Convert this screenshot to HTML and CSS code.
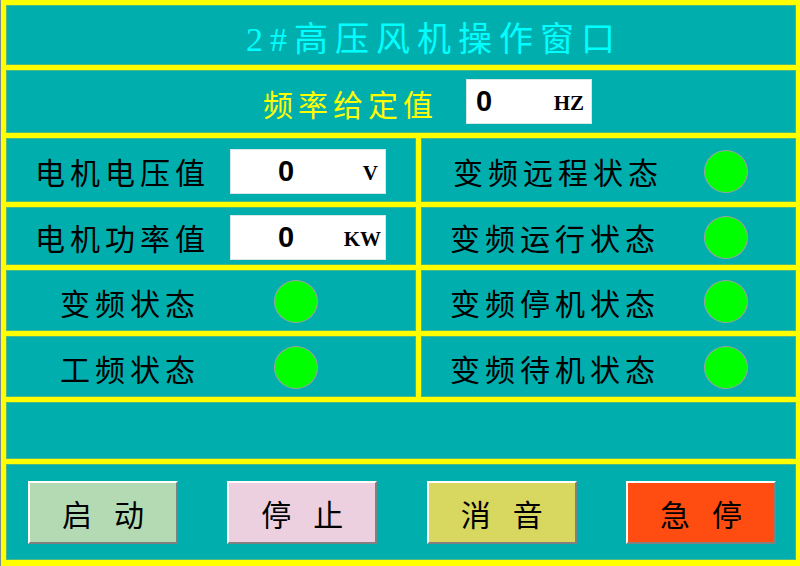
FILE: index.html
```html
<!DOCTYPE html>
<html lang="zh">
<head>
<meta charset="utf-8">
<title>2#高压风机操作窗口</title>
<link rel="stylesheet" href="styles.css">
</head>
<body>
<div class="hmi">
  <div class="panel span2 title">2#高压风机操作窗口</div>
  <div class="panel span2 freq">
    <span class="label freq-label">频率给定值</span>
    <div class="vbox freq-box"><span class="num">0</span><span class="unit">HZ</span></div>
  </div>

  <div class="panel cell-l">
    <span class="label">电机电压值</span>
    <div class="vbox"><span class="num">0</span><span class="unit">V</span></div>
  </div>
  <div class="panel cell-r">
    <span class="label first">变频远程状态</span>
    <span class="lamp"></span>
  </div>

  <div class="panel cell-l">
    <span class="label">电机功率值</span>
    <div class="vbox"><span class="num">0</span><span class="unit unit-kw">KW</span></div>
  </div>
  <div class="panel cell-r">
    <span class="label">变频运行状态</span>
    <span class="lamp"></span>
  </div>

  <div class="panel cell-l lampcell">
    <span class="label">变频状态</span>
    <span class="lamp"></span>
  </div>
  <div class="panel cell-r">
    <span class="label">变频停机状态</span>
    <span class="lamp"></span>
  </div>

  <div class="panel cell-l lampcell">
    <span class="label">工频状态</span>
    <span class="lamp"></span>
  </div>
  <div class="panel cell-r">
    <span class="label">变频待机状态</span>
    <span class="lamp"></span>
  </div>

  <div class="panel span2 empty"></div>

  <div class="panel span2 buttons">
    <button class="btn btn-start">启动</button>
    <button class="btn btn-stop">停止</button>
    <button class="btn btn-mute">消音</button>
    <button class="btn btn-estop">急停</button>
  </div>
</div>
</body>
</html>
```

FILE: styles.css
```css
html, body {
  margin: 0;
  padding: 0;
}
body {
  width: 800px;
  height: 566px;
  overflow: hidden;
  background: #ffff00;
  font-family: "Noto Sans CJK SC", sans-serif;
}
.hmi {
  box-sizing: border-box;
  width: 800px;
  height: 566px;
  display: grid;
  grid-template-columns: 410px 375px;
  grid-template-rows: 60px 63px 64px 58px 61px 61px 57px 96px;
  gap: 5px;
  padding: 5px 5px 6px 5px;
  border-left: 1px solid #7a8c8c;
}
.panel {
  background: #00aeae;
  display: flex;
  align-items: center;
  box-shadow: inset 0 0 0 1px #4fb87a;
}
.span2 {
  grid-column: 1 / 3;
}
.title {
  padding-left: 240px;
  padding-top: 2px;
  color: #00ffff;
  font-family: "Liberation Serif", "Noto Sans CJK SC", serif;
  font-size: 34px;
  letter-spacing: 7px;
}
.label {
  font-family: "Noto Sans CJK SC", sans-serif;
  font-size: 30px;
  letter-spacing: 5px;
  color: #000;
  white-space: nowrap;
  line-height: 1;
  padding-top: 2px;
}
.freq {
  padding-left: 257px;
}
.freq-label {
  color: #ffff00;
  margin-right: 28px;
}
.vbox {
  box-sizing: border-box;
  width: 156px;
  height: 45px;
  background: #fff;
  display: flex;
  align-items: center;
  border: 1px solid #d8e8e8;
  margin-top: 3px;
}
.freq-box {
  width: 126px;
  margin-top: 0;
}
.num {
  font-family: "Liberation Sans", sans-serif;
  font-weight: bold;
  font-size: 29px;
  margin-left: 47px;
  color: #000;
}
.freq-box .num {
  margin-left: 9px;
}
.unit {
  margin-left: auto;
  margin-right: 7px;
  font-family: "Liberation Serif", serif;
  font-weight: bold;
  font-size: 21px;
  color: #000;
  padding-top: 4px;
}
.unit-kw {
  margin-right: 4px;
}
.cell-l {
  justify-content: space-between;
  padding: 0 30px 0 29px;
}
.cell-l.lampcell {
  justify-content: flex-start;
  padding-left: 54px;
}
.cell-l.lampcell .lamp {
  margin-left: 74px;
}
.cell-r {
  justify-content: space-between;
  padding: 0 48px 0 29px;
}
.cell-r .first {
  margin-left: 3px;
}
.lamp {
  box-sizing: border-box;
  width: 44px;
  height: 43px;
  border-radius: 50%;
  background: #00ff00;
  border: 1px solid #a0a0a0;
  flex: none;
  margin-top: 2px;
}
.buttons {
  justify-content: space-between;
  padding: 0 20px 0 22px;
}
.btn {
  box-sizing: border-box;
  width: 150px;
  height: 63px;
  border: 2px solid;
  border-color: #ffffff #808080 #808080 #ffffff;
  font-family: "Noto Sans CJK SC", sans-serif;
  font-size: 30px;
  letter-spacing: 22px;
  padding: 0 0 0 22px;
  color: #000;
  display: flex;
  align-items: center;
  justify-content: center;
  line-height: 1;
  margin-top: 1px;
}
.btn-start { background: #b3dab3; }
.btn-stop { background: #ecd0e0; }
.btn-mute { background: #d8d860; }
.btn-estop { background: #ff4c10; }
```
